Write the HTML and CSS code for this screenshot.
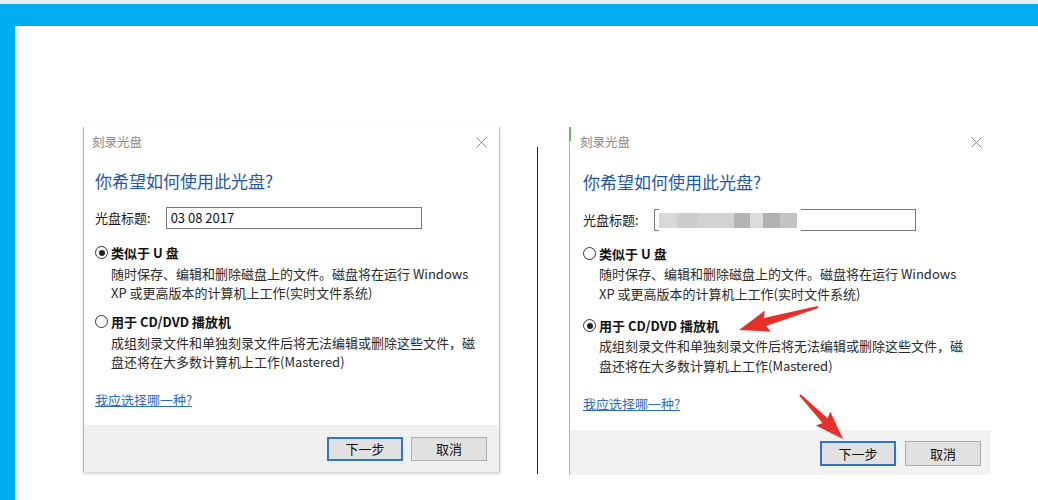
FILE: index.html
```html
<!DOCTYPE html>
<html lang="zh-CN">
<head>
<meta charset="utf-8">
<title>刻录光盘</title>
<link rel="stylesheet" href="styles.css">
</head>
<body>
<div class="page">
  <div class="topline"></div>
  <div class="topbar"></div>
  <div class="main">
    <div class="sidebar"></div>
    <div class="content">

      <div class="dialog d-left">
        <div class="titlebar">
          <span class="title">刻录光盘</span>
          <svg class="close" width="11" height="11" viewBox="0 0 11 11"><path d="M0.5 0.5 L10.5 10.5 M10.5 0.5 L0.5 10.5" stroke="#8c8c8c" stroke-width="1" fill="none"/></svg>
        </div>
        <div class="body">
          <div class="heading">你希望如何使用此光盘?</div>
          <div class="field">
            <span class="label">光盘标题:</span>
            <div class="input">03 08 2017</div>
          </div>
          <div class="option opt1">
            <div class="radio-row"><span class="radio checked"></span><span>类似于 U 盘</span></div>
            <div class="desc">随时保存、编辑和删除磁盘上的文件。磁盘将在运行 Windows<br>XP 或更高版本的计算机上工作(实时文件系统)</div>
          </div>
          <div class="option opt2">
            <div class="radio-row"><span class="radio"></span><span>用于 CD/DVD 播放机</span></div>
            <div class="desc">成组刻录文件和单独刻录文件后将无法编辑或删除这些文件，磁<br>盘还将在大多数计算机上工作(Mastered)</div>
          </div>
          <a class="link" href="#">我应选择哪一种?</a>
        </div>
        <div class="footer">
          <button class="btn primary">下一步</button>
          <button class="btn">取消</button>
        </div>
      </div>

      <div class="divider"></div>

      <div class="dialog d-right">
        <div class="titlebar">
          <span class="title">刻录光盘</span>
          <svg class="close" width="11" height="11" viewBox="0 0 11 11"><path d="M0.5 0.5 L10.5 10.5 M10.5 0.5 L0.5 10.5" stroke="#8c8c8c" stroke-width="1" fill="none"/></svg>
        </div>
        <div class="body">
          <div class="heading">你希望如何使用此光盘?</div>
          <div class="field">
            <span class="label">光盘标题:</span>
            <div class="input blurred">
              <div class="blur">
                <span class="b b1"></span><span class="b b2"></span><span class="b b3"></span><span class="b b4"></span><span class="b b5"></span><span class="b b6"></span><span class="b b7"></span>
              </div>
            </div>
          </div>
          <div class="option opt1">
            <div class="radio-row"><span class="radio"></span><span>类似于 U 盘</span></div>
            <div class="desc">随时保存、编辑和删除磁盘上的文件。磁盘将在运行 Windows<br>XP 或更高版本的计算机上工作(实时文件系统)</div>
          </div>
          <div class="option opt2">
            <div class="radio-row"><span class="radio checked"></span><span>用于 CD/DVD 播放机</span></div>
            <div class="desc">成组刻录文件和单独刻录文件后将无法编辑或删除这些文件，磁<br>盘还将在大多数计算机上工作(Mastered)</div>
          </div>
          <a class="link" href="#">我应选择哪一种?</a>
        </div>
        <div class="footer">
          <button class="btn primary">下一步</button>
          <button class="btn">取消</button>
        </div>
      </div>

    </div>
  </div>
  <svg class="arrows" width="1038" height="500" viewBox="0 0 1038 500">
    <polygon fill="#e8302a" points="817.7,306 763.9,318.1 764.9,310.5 739,330 770.9,331.7 766.1,325.9 818.3,308"/>
    <polygon fill="#e8302a" points="800.7,394.3 827.6,418.3 830.2,411.6 843,439 815.9,425.6 822.6,423.1 799.3,395.7"/>
  </svg>
</div>
</body>
</html>
```

FILE: styles.css
```css
* { box-sizing: border-box; }
html, body { margin: 0; padding: 0; background: #ffffff; }
body {
  font-family: "Noto Sans CJK SC", "Noto Sans", "Liberation Sans", sans-serif;
  color: #222;
}
.page {
  position: relative;
  width: 1038px;
  height: 500px;
  overflow: hidden;
  display: flex;
  flex-direction: column;
  background: #fff;
}
.topline { height: 4px; background: #e4eef5; flex: none; }
.topbar { height: 22px; background: #00aeef; flex: none; border-bottom: 1px solid #1aa0d8; }
.main { flex: 1; display: flex; }
.sidebar { width: 15px; background: #00aeef; flex: none; }
.content {
  flex: 1;
  display: flex;
  align-items: flex-start;
  padding-top: 101px;
}

/* dialog */
.dialog {
  position: relative;
  display: flex;
  flex-direction: column;
  background: #fff;
  border-left: 1px solid #b4b4b4;
}
.d-left {
  margin-left: 68px;
  width: 417px;
  height: 345px;
  border-right: 1px solid #c4c4c4;
  box-shadow: 0 2px 3px rgba(0,0,0,0.18);
}
.d-right {
  margin-left: 31px;
  width: 422px;
  height: 348px;
}
.d-right::before {
  content: "";
  position: absolute;
  left: -1px;
  top: 0;
  width: 2px;
  height: 14px;
  background: #6db46d;
}
.divider {
  margin-left: 37px;
  margin-top: 20px;
  width: 1px;
  height: 327px;
  background: #222;
  flex: none;
}

.titlebar {
  height: 30px;
  display: flex;
  align-items: center;
  justify-content: space-between;
  padding: 0 12px 0 8px;
}
.d-right .titlebar { padding: 0 9px 0 10px; }
.title { font-size: 12.5px; color: #8a8a8a; line-height: 16px; }
.close { display: block; }

.body { padding: 0 11px; display: flex; flex-direction: column; align-items: flex-start; }
.d-right .body { padding: 0 13px; }

.heading {
  margin-top: 12px;
  font-size: 17px;
  line-height: 24px;
  color: #1f57a8;
}
.d-right .heading { margin-top: 13px; }

.field { display: flex; align-items: center; margin-top: 14px; }
.d-right .field { margin-top: 15px; }
.label { font-size: 13px; line-height: 18px; color: #1a1a1a; margin-right: 15px; }
.input {
  position: relative;
  width: 256px;
  height: 22px;
  border: 1px solid #777;
  font-size: 13px;
  line-height: 20px;
  padding-left: 4px;
  color: #111;
  background: #fff;
}
.d-right .input { width: 262px; }
.blur {
  position: absolute;
  left: 4px;
  top: -1px;
  height: 22px;
  width: 142px;
  background: #fff;
  display: flex;
  align-items: center;
  filter: blur(0.6px);
}
.b { display: block; height: 15px; }
.b1 { width: 18px; background: #d9d9d9; }
.b2 { width: 22px; background: #cdcdcd; }
.b3 { width: 35px; background: #d2d2d2; }
.b4 { width: 16px; background: #b3b3b3; }
.b5 { width: 13px; background: #dcdcdc; }
.b6 { width: 17px; background: #b1b1b1; }
.b7 { width: 17px; background: #c3c3c3; }

.option { display: flex; flex-direction: column; }
.opt1 { margin-top: 14px; }
.opt2 { margin-top: 10px; }
.d-right .opt1 { margin-top: 13px; }
.d-right .opt2 { margin-top: 13px; }

.radio-row {
  display: flex;
  align-items: center;
  font-size: 13px;
  font-weight: bold;
  line-height: 19px;
  color: #111;
}
.radio {
  width: 13px;
  height: 13px;
  border: 1.2px solid #333;
  border-radius: 50%;
  margin-right: 3px;
  display: flex;
  align-items: center;
  justify-content: center;
  flex: none;
}
.radio.checked::after {
  content: "";
  width: 6px;
  height: 6px;
  border-radius: 50%;
  background: #222;
}
.desc {
  margin-top: 2px;
  padding-left: 16px;
  font-size: 13px;
  line-height: 19px;
  color: #2a2a2a;
  white-space: nowrap;
}
.d-right .desc { margin-top: 1px; line-height: 19.5px; }

.link {
  margin-top: 19px;
  font-size: 13px;
  line-height: 19px;
  color: #2d6cc0;
  text-decoration: underline;
}

.footer {
  margin-top: auto;
  height: 47px;
  background: #f0f0f0;
  display: flex;
  justify-content: flex-end;
  align-items: flex-start;
  padding: 12px 12px 0 0;
  gap: 8px;
}
.d-right .footer { height: 45px; padding: 11px 10px 0 0; background: #f2f2f2; gap: 9px; }
.btn {
  width: 76px;
  height: 24px;
  background: #e1e1e1;
  border: 1px solid #adadad;
  font-family: "Noto Sans CJK SC", "Noto Sans", sans-serif;
  font-size: 13px;
  line-height: 20px;
  color: #111;
  padding: 0;
}
.d-right .btn { height: 25px; }
.btn.primary { border: 2px solid #2f76c9; }

.arrows {
  position: absolute;
  left: 0;
  top: 0;
  pointer-events: none;
}
```
